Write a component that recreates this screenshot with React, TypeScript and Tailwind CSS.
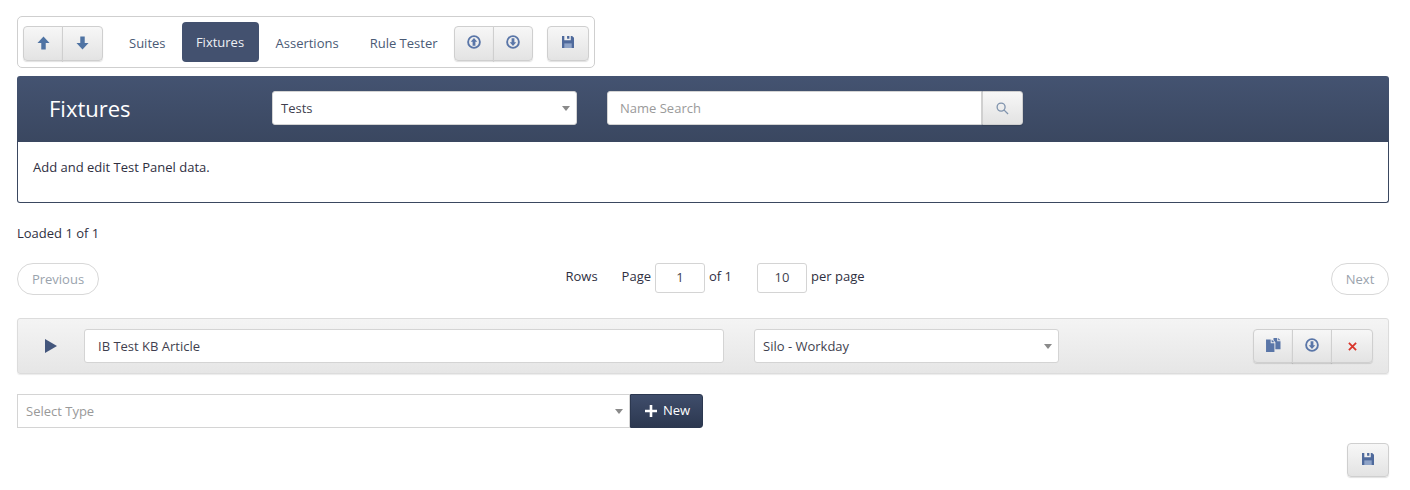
import React from "react";

const btn =
  "flex items-center justify-center bg-gradient-to-b from-[#f7f7f7] to-[#e3e3e3] border border-[#cfcfcf] shadow-[0_1px_1px_rgba(0,0,0,0.12)]";
const field = "bg-white border border-[#d4d4d4] rounded-[3px] text-[13px] text-[#3f3f4f]";

const ArrowUp = () => (
  <svg width="13" height="14" viewBox="0 0 14 15" fill="#4f73a3">
    <path d="M7 .5 13.5 7.5H9.4V14.5H4.6V7.5H.5Z" />
  </svg>
);

const ArrowDown = () => (
  <svg width="13" height="14" viewBox="0 0 14 15" fill="#4f73a3">
    <path d="M7 14.5 13.5 7.5H9.4V.5H4.6V7.5H.5Z" />
  </svg>
);

const CircleArrow: React.FC<{ down?: boolean }> = ({ down }) => (
  <svg width="14" height="14" viewBox="0 0 15 15" className={down ? "rotate-180 -mt-[3px]" : "-mt-[3px]"}>
    <circle cx="7.5" cy="7.5" r="6.3" fill="none" stroke="#5a76a8" strokeWidth="2" />
    <path d="M7.5 3.2 11 7.2H9V11.5H6V7.2H4Z" fill="#5a76a8" />
  </svg>
);

const SaveIcon = () => (
  <svg width="12" height="12" viewBox="0 0 13 13" className="-mt-[2px]">
    <path d="M0 0H2.5V4.5H9.5V0H11L13 2V13H0Z" fill="#4f6a9c" />
    <rect x="5.5" y="0" width="2.5" height="3" fill="#4f6a9c" />
    <rect x="2.5" y="8" width="8" height="5" fill="#8fa4c8" />
  </svg>
);

const CopyIcon = () => (
  <svg width="15" height="14" viewBox="0 0 16 15" fill="#5a76a8" className="-mt-[3px]">
    <path d="M0 1.5H5V5.5H9V15H0Z" />
    <path d="M6 1.5 9 4.5H6Z" />
    <path d="M8 0H12V3.5H15.5V12H10V4.5L8 2.5Z" />
    <path d="M13 0 15.5 2.5H13Z" />
  </svg>
);

const Caret = () => <span className="border-x-[4px] border-x-transparent border-t-[5px] border-t-[#8a8a8a]" />;

const Select: React.FC<{ label: string; className: string; muted?: boolean }> = ({ label, className, muted }) => (
  <div className={`${field} ${className} flex items-center justify-between pl-2 pr-[6px] ${muted ? "text-[#999]" : ""}`}>
    <span className="pt-[2px]">{label}</span>
    <Caret />
  </div>
);

export default function App() {
  return (
    <div className="pt-4 pl-[17px] pr-[21px] h-[490px] overflow-hidden bg-white text-[13px] text-[#2f2f3f] whitespace-nowrap font-['Open_Sans','Noto_Sans',sans-serif]">
      <div className="w-[578px] h-[52px] border border-[#cfcfcf] rounded-[5px] flex items-center pl-[5px]">
        <div className="flex mt-[2px]">
          <div className={`${btn} w-[40px] h-[35px] rounded-l-[4px]`}><ArrowUp /></div>
          <div className={`${btn} w-[41px] h-[35px] -ml-px rounded-r-[4px]`}><ArrowDown /></div>
        </div>
        <span className="ml-[26px] pt-[4px] text-[#4a5a75]">Suites</span>
        <span className="ml-[16px] w-[77px] h-[40px] pt-[2px] rounded-[4px] bg-[#43516f] text-[#eef0f4] flex items-center justify-center">Fixtures</span>
        <span className="ml-[17px] pt-[4px] text-[#4a5a75]">Assertions</span>
        <span className="ml-[31px] pt-[4px] text-[#4a5a75]">Rule Tester</span>
        <div className="flex ml-[16px] mt-[2px]">
          <div className={`${btn} w-[40px] h-[35px] rounded-l-[4px]`}><CircleArrow /></div>
          <div className={`${btn} w-[40px] h-[35px] -ml-px rounded-r-[4px]`}><CircleArrow down /></div>
        </div>
        <div className={`${btn} w-[42px] h-[35px] ml-[14px] mt-[2px] rounded-[4px]`}><SaveIcon /></div>
      </div>

      <div className="mt-2 h-[66px] pb-[2px] rounded-t-[3px] bg-gradient-to-b from-[#445371] to-[#3a4760] flex items-center">
        <h1 className="ml-8 w-[223px] text-[22px] text-white">Fixtures</h1>
        <Select label="Tests" className="w-[305px] h-[34px]" />
        <div className="ml-[30px] flex h-[34px]">
          <div className={`${field} w-[375px] rounded-r-none flex items-center px-3 pt-[2px] text-[#9a9a9a]`}>Name Search</div>
          <div className={`${btn} w-[41px] rounded-r-[3px]`}>
            <svg width="13" height="13" viewBox="0 0 14 14" fill="none" stroke="#7f93ad" strokeWidth="1.4">
              <circle cx="5.5" cy="5.5" r="4.3" />
              <path d="M8.5 8.5 13 13" />
            </svg>
          </div>
        </div>
      </div>
      <div className="h-[61px] border border-t-0 border-[#3a4760] rounded-b-[3px] pl-[15px] pt-[16px]">Add and edit Test Panel data.</div>

      <p className="mt-[20px] leading-[20px]">Loaded 1 of 1</p>

      <div className="mt-5 flex justify-between items-start">
        <div className="w-[82px] h-[32px] pt-[2px] rounded-full border border-[#d8d8d8] flex items-center justify-center text-[#9aa3ad]">Previous</div>
        <div className="flex items-start h-[30px] leading-[26px]">
          <span>Rows</span>
          <span className="ml-6">Page</span>
          <div className={`${field} ml-1 w-[50px] h-[30px] pb-[2px] flex items-center justify-center`}>1</div>
          <span className="ml-1">of 1</span>
          <div className={`${field} ml-[25px] w-[50px] h-[30px] pb-[2px] flex items-center justify-center`}>10</div>
          <span className="ml-1">per page</span>
        </div>
        <div className="w-[58px] h-[32px] pt-[2px] rounded-full border border-[#d8d8d8] flex items-center justify-center text-[#9aa3ad]">Next</div>
      </div>

      <div className="mt-[23px] h-[56px] border border-[#dcdcdc] rounded-[3px] bg-gradient-to-b from-[#f4f4f4] to-[#e6e6e6] shadow-[0_1px_1px_rgba(0,0,0,0.08)] flex items-center">
        <svg width="12" height="14" viewBox="0 0 12 14" fill="#43567c" className="ml-[27px]">
          <path d="M0 0 12 7 0 14Z" />
        </svg>
        <div className={`${field} ml-[27px] w-[640px] h-[34px] flex items-center px-[13px] pt-[2px]`}>IB Test KB Article</div>
        <Select label="Silo - Workday" className="ml-[30px] w-[305px] h-[34px]" />
        <div className="ml-auto mr-[15px] flex">
          <div className={`${btn} w-[40px] h-[34px] rounded-l-[4px]`}><CopyIcon /></div>
          <div className={`${btn} w-[40px] h-[34px] -ml-px`}><CircleArrow down /></div>
          <div className={`${btn} w-[42px] h-[34px] -ml-px rounded-r-[4px]`}>
            <svg width="9" height="9" viewBox="0 0 10 10" stroke="#d9352a" strokeWidth="2">
              <path d="M1 1 9 9M9 1 1 9" />
            </svg>
          </div>
        </div>
      </div>

      <div className="mt-5 flex h-[34px]">
        <Select label="Select Type" muted className="w-[613px] rounded-none" />
        <div className="w-[73px] pl-[2px] rounded-r-[3px] bg-gradient-to-b from-[#3f4d6b] to-[#2c3850] border border-[#2c3850] flex items-center justify-center gap-[6px] text-white">
          <svg width="12" height="12" viewBox="0 0 12 12" fill="#fff">
            <path d="M4.7 0H7.3V4.7H12V7.3H7.3V12H4.7V7.3H0V4.7H4.7Z" />
          </svg>
          New
        </div>
      </div>

      <div className="mt-[15px] flex justify-end">
        <div className={`${btn} w-[42px] h-[34px] rounded-[4px]`}><SaveIcon /></div>
      </div>
    </div>
  );
}
